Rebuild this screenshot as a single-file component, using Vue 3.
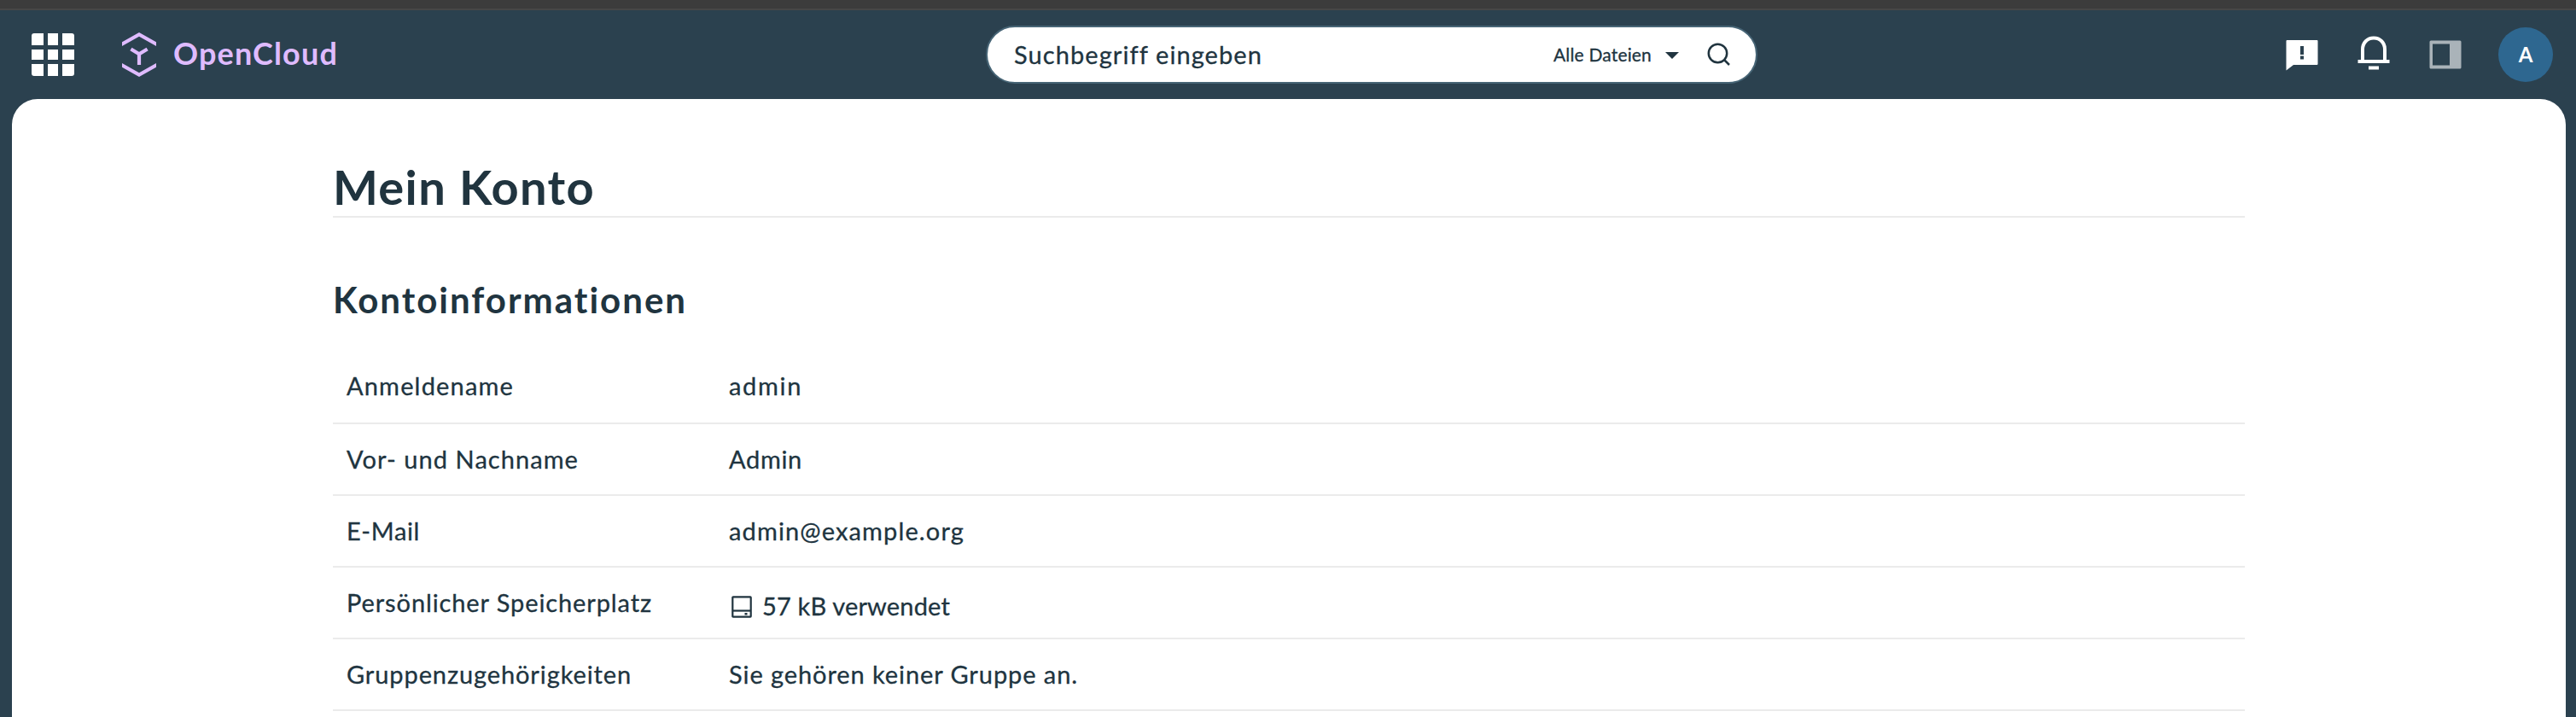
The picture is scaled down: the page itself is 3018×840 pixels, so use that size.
<script setup>
const apps = [0, 1, 2].flatMap(r => [0, 1, 2].map(c => ({ r, c })))
const at = [0, 19, 36]
const size = [14, 12, 14]

const rows = [
  { label: 'Anmeldename', labelWidth: 196, value: 'admin', valueWidth: 86 },
  { label: 'Vor- und Nachname', labelWidth: 272, value: 'Admin', valueWidth: 86 },
  { label: 'E-Mail', labelWidth: 86, value: 'admin@example.org', valueWidth: 276 },
  { label: 'Persönlicher Speicherplatz', labelWidth: 358, value: '57 kB verwendet', valueWidth: 220, drive: true },
  { label: 'Gruppenzugehörigkeiten', labelWidth: 334, value: 'Sie gehören keiner Gruppe an.', valueWidth: 409 },
]

// Spreads the letters of an element so that the text takes the given width.
const vFit = {
  mounted(el, { value }) {
    const natural = el.getBoundingClientRect().width
    el.style.letterSpacing = `${(value - natural) / el.textContent.length}px`
  },
}
</script>

<template>
  <div class="shell">
    <div class="strip"></div>
    <header class="topbar">
      <div class="left">
        <svg class="apps" width="50" height="50" viewBox="0 0 50 50">
          <defs><clipPath id="round"><rect width="50" height="50" rx="3" /></clipPath></defs>
          <g clip-path="url(#round)" fill="#fff">
            <rect v-for="a in apps" :key="`${a.r}${a.c}`" :x="at[a.c]" :y="at[a.r]" :width="size[a.c]" :height="size[a.r]" />
          </g>
        </svg>
        <svg class="mark" width="40" height="52" viewBox="0 0 40 52" fill="none" stroke="#dfbbff">
          <path d="M0 16V11.2L20 0L40 11.2V16L20 4.7Z" fill="#dfbbff" stroke="none" />
          <path d="M0 36V40.8L20 52L40 40.8V36L20 47.3Z" fill="#dfbbff" stroke="none" />
          <path d="M10.4 19.5L20 25.2L29.6 19.5M20 25V38" stroke-width="4.2" />
        </svg>
        <span class="brand" v-fit="193">OpenCloud</span>
      </div>
      <div class="search">
        <span class="placeholder" v-fit="291">Suchbegriff eingeben</span>
        <span class="scope" v-fit="115">Alle Dateien</span>
        <svg class="caret" width="16" height="8" viewBox="0 0 16 8"><path d="M0 0H16L8 8Z" fill="#20343f" /></svg>
        <svg class="lens" width="28" height="28" viewBox="0 0 28 28" fill="none" stroke="#20343f" stroke-width="2.5">
          <circle cx="12.5" cy="12.5" r="10.7" /><path d="M20 20L26 26" />
        </svg>
      </div>
      <div class="right">
        <svg class="feedback" width="38" height="37" viewBox="0 0 38 37">
          <path d="M1.5 1H36.500Q37.500 1 37.500 2V29Q37.500 30 36.500 30H9L.5 36.500V2Q.5 1 1.500 1Z" fill="#fff" />
          <path d="M17 8H21V18H17ZM17 19.500H21V23.500H17Z" fill="#2b414f" />
        </svg>
        <svg class="bell" width="38" height="40" viewBox="0 0 38 40" fill="none" stroke="#fff">
          <path d="M6 29V16C6 8 11.500 2.500 19 2.500S32 8 32 16V29" stroke-width="4" />
          <path d="M.5 30H37.500M13 37.500H25" stroke-width="4" />
        </svg>
        <svg class="panel" width="38" height="34" viewBox="0 0 38 34">
          <path fill-rule="evenodd" d="M2 .5H36Q37.500 .5 37.500 2V32Q37.500 33.500 36 33.500H2Q.5 33.500 .5 32V2Q.5 .5 2 .5ZM4 4.500V29.500H24V4.500Z" fill="#aab3b9" />
        </svg>
        <div class="avatar"><span>A</span></div>
      </div>
    </header>
    <main>
      <section>
        <h1><span v-fit="307">Mein Konto</span></h1>
        <h2><span v-fit="415">Kontoinformationen</span></h2>
        <dl>
          <div v-for="row in rows" :key="row.label" class="row">
            <dt><span v-fit="row.labelWidth">{{ row.label }}</span></dt>
            <dd :class="{ drive: row.drive }">
              <svg v-if="row.drive" width="24" height="26" viewBox="0 0 24 26" fill="none" stroke="#20343f" stroke-width="2.2">
                <rect x="1.300" y="1.300" width="21.400" height="23.400" rx=".6" /><path d="M1 17.500H23" />
                <rect x="15.500" y="20" width="3" height="2.500" fill="#20343f" stroke="none" />
              </svg>
              <span v-fit="row.valueWidth">{{ row.value }}</span>
            </dd>
          </div>
        </dl>
      </section>
    </main>
  </div>
</template>

<style>
body { margin: 0; overflow: hidden; }
</style>

<style scoped>
.shell { height: 840px; box-sizing: border-box; display: flex; flex-direction: column; background: #2b414f; color: #20343f; font: 29px/42px Lato, "Open Sans", sans-serif; overflow: hidden; }
.shell span { white-space: nowrap; font-kerning: normal; font-variant-ligatures: none; }
.placeholder, .scope, dt, dd { -webkit-text-stroke: .3px currentColor; }
.strip { height: 10px; flex: none; background: #3c3c3c; border-bottom: 2px solid #474747; }
.topbar { height: 104px; flex: none; display: grid; grid-template-columns: 1155px 904px 1fr; align-items: center; }
.left { display: flex; align-items: center; padding-left: 37px; }
.mark { margin-left: 56px; }
.brand { margin-left: 20px; margin-top: -4px; color: #dfbbff; font-size: 36px; font-weight: 700; }
.search { height: 68px; box-sizing: border-box; border: 2px solid #476576; border-radius: 34px; background: #fff; display: flex; align-items: center; padding: 0 29px 0 31px; }
.placeholder { margin-right: auto; }
.scope { font-size: 21px; }
.caret { margin: 1px 0 0 16px; }
.lens { margin-left: 33px; }
.right { display: flex; align-items: center; justify-content: flex-end; padding-right: 27px; }
.feedback { margin-top: 1px; }
.bell { margin: -4px 0 0 46px; }
.panel { margin-left: 46px; }
.avatar { width: 64px; height: 64px; margin-left: 43px; border-radius: 50%; background: #2e6790; color: #fff; display: grid; place-items: center; font-size: 24px; font-weight: 700; line-height: 32px; }
main { flex: 1; margin: 0 12px 0 14px; background: #fff; border-radius: 30px 30px 0 0; }
section { width: 2240px; margin-left: 376px; padding-top: 65px; }
h1 { height: 72px; margin: 0; border-bottom: 2px solid #ebebeb; font-size: 56px; line-height: 76px; }
h2 { height: 66px; margin: 64px 0 26px; font-size: 42px; line-height: 64px; }
dl { margin: 0; }
.row { height: 84px; box-sizing: border-box; display: grid; grid-template-columns: 448px 1fr; align-items: center; padding: 0 0 0 16px; border-bottom: 2px solid #ebebeb; }
.row:first-child { height: 86px; padding-bottom: 2px; }
dt, dd { margin: 0; display: flex; align-items: center; }
.drive { padding-top: 8px; }
.drive svg { margin: 2px 12px 0 3px; }
</style>
